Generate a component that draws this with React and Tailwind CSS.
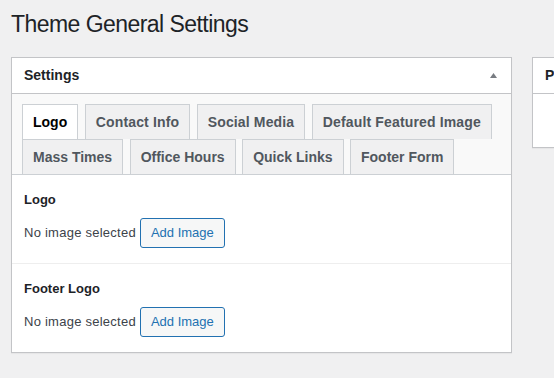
import React from "react";

const tabBase =
  "px-[10px] py-[5px] leading-[24px] text-[14px] font-bold border border-b-0 border-[#ccd0d4] whitespace-nowrap";

function Tab({ label, active, wide }) {
  return (
    <div
      className={
        tabBase +
        (wide ? " tracking-[0.15px]" : "") +
        (active ? " bg-white text-black" : " bg-[#f0f0f1] text-[#50575e]")
      }
    >
      {label}
    </div>
  );
}

function Field({ label, first }) {
  return (
    <div
      className={
        "px-[12px] py-[15px]" + (first ? "" : " border-t border-[#eeeeee]")
      }
    >
      <div className="text-[13px] font-bold leading-[20px] text-[#1d2327]">
        {label}
      </div>
      <div className="mt-[8px] flex items-center gap-[4px]">
        <span className="text-[13px] leading-[20px] text-[#3c434a] tracking-[0.25px]">
          No image selected
        </span>
        <button className="h-[30px] px-[10px] border border-[#2271b1] rounded-[3px] bg-[#f6f7f7] text-[#2271b1] text-[13px] leading-[28px]">
          Add Image
        </button>
      </div>
    </div>
  );
}

export default function App() {
  return (
    <div className="w-[554px] h-[378px] overflow-hidden bg-[#f0f0f1] font-['Liberation_Sans',Arial,sans-serif] pl-[11px] pt-[10px]">
      <h1 className="text-[23px] leading-[29px] font-normal text-[#1d2327] tracking-[-0.55px] whitespace-nowrap">
        Theme General Settings
      </h1>
      <div className="mt-[18px] flex gap-[20px] items-start">
        <div className="w-[501px] shrink-0 border border-[#c3c4c7] bg-white shadow-[0_1px_1px_rgba(0,0,0,0.04)]">
          <div className="h-[36px] border-b border-[#c3c4c7] flex items-center justify-between pl-[12px] pr-[14px]">
            <span className="text-[14px] font-bold text-[#1d2327]">Settings</span>
            <svg width="7" height="5" viewBox="0 0 7 5">
              <polygon points="0,5 3.5,0 7,5" fill="#787c82" />
            </svg>
          </div>
          <div className="bg-[#f9f9f9] pt-[10px] px-[10px] border-b border-[#ccd0d4]">
            <div className="flex gap-[6.5px]">
              <Tab label="Logo" active />
              <Tab label="Contact Info" wide />
              <Tab label="Social Media" wide />
              <Tab label="Default Featured Image" wide />
            </div>
            <div className="flex gap-[6.5px]">
              <Tab label="Mass Times" />
              <Tab label="Office Hours" />
              <Tab label="Quick Links" />
              <Tab label="Footer Form" />
            </div>
          </div>
          <Field label="Logo" first />
          <Field label="Footer Logo" />
        </div>
        <div className="w-[260px] shrink-0 border border-[#c3c4c7] bg-white shadow-[0_1px_1px_rgba(0,0,0,0.04)]">
          <div className="h-[36px] border-b border-[#c3c4c7] flex items-center pl-[12px]">
            <span className="text-[14px] font-bold text-[#1d2327]">Publish</span>
          </div>
          <div className="h-[53px]"></div>
        </div>
      </div>
    </div>
  );
}
